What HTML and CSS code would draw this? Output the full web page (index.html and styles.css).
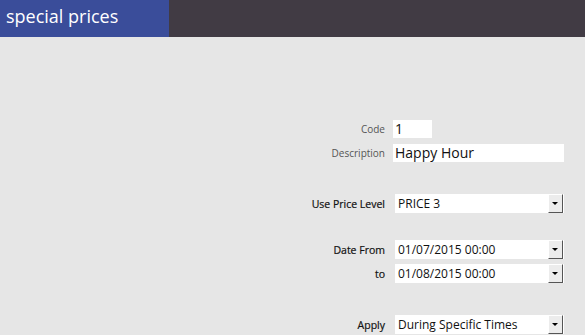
FILE: index.html
```html
<!DOCTYPE html>
<html lang="en">
<head>
  <meta charset="UTF-8">
  <title>special prices</title>
  <link rel="stylesheet" href="styles.css">
</head>
<body>
  <div class="header">
    <div class="title">special prices</div>
    <div class="bar"></div>
  </div>

  <div class="form">
    <div class="row">
      <span class="label">Code</span>
      <span class="field short">1</span>
    </div>
    <div class="row near">
      <span class="label">Description</span>
      <span class="field">Happy Hour</span>
    </div>

    <div class="row far">
      <span class="label dark">Use Price Level</span>
      <span class="field select">PRICE 3<i class="drop"></i></span>
    </div>

    <div class="row mid">
      <span class="label dark">Date From</span>
      <span class="field select">01/07/2015 00:00<i class="drop"></i></span>
    </div>
    <div class="row near">
      <span class="label dark">to</span>
      <span class="field select">01/08/2015 00:00<i class="drop"></i></span>
    </div>

    <div class="row far">
      <span class="label dark">Apply</span>
      <span class="field select">During Specific Times<i class="drop"></i></span>
    </div>
  </div>
</body>
</html>
```

FILE: styles.css
```css
*{
  margin: 0;
  padding: 0;
  box-sizing: border-box;
}

body{
  width: 585px;
  height: 335px;
  overflow: hidden;
  background: #e6e6e6;
  font-family: "Open Sans", "Noto Sans", sans-serif;
}

.header{
  display: flex;
  height: 37px;
}
.title{
  width: 169px;
  padding: 4px 0 0 6px;
  font-size: 18px;
  line-height: 25px;
  color: #fff;
  background: #3a4d9a;
}
.bar{
  flex: 1;
  background: #413b44;
}

.form{
  padding: 82px 0 0 281px;
}
.row{
  display: flex;
  align-items: center;
  height: 19px;
}
.row.near{
  margin-top: 5px;
}
.row.mid{
  margin-top: 27px;
}
.row.far{
  margin-top: 32px;
}

.label{
  width: 112px;
  padding-right: 8px;
  text-align: right;
  font-size: 10px;
  color: #555;
}
.label.dark{
  font-size: 10.5px;
  color: #111;
  -webkit-text-stroke: 0.2px #111;
}

.field{
  position: relative;
  width: 171px;
  height: 18px;
  padding-left: 2px;
  font-size: 14px;
  line-height: 18px;
  color: #111;
  background: #fff;
}
.field.short{
  width: 39px;
}
.field.select{
  width: 169px;
  height: 19px;
  margin-left: 2px;
  padding-left: 3px;
  font-size: 12px;
  line-height: 19px;
}

.drop{
  position: absolute;
  top: 0;
  right: 1px;
  width: 15px;
  height: 19px;
  background: #ececec;
  border-top: 1px solid #fff;
  border-left: 1px solid #fff;
  border-right: 1px solid #555;
  border-bottom: 1px solid #555;
}
.drop::after{
  content: '';
  position: absolute;
  top: 7px;
  left: 3px;
  border-left: 3px solid transparent;
  border-right: 3px solid transparent;
  border-top: 3px solid #000;
}
```
